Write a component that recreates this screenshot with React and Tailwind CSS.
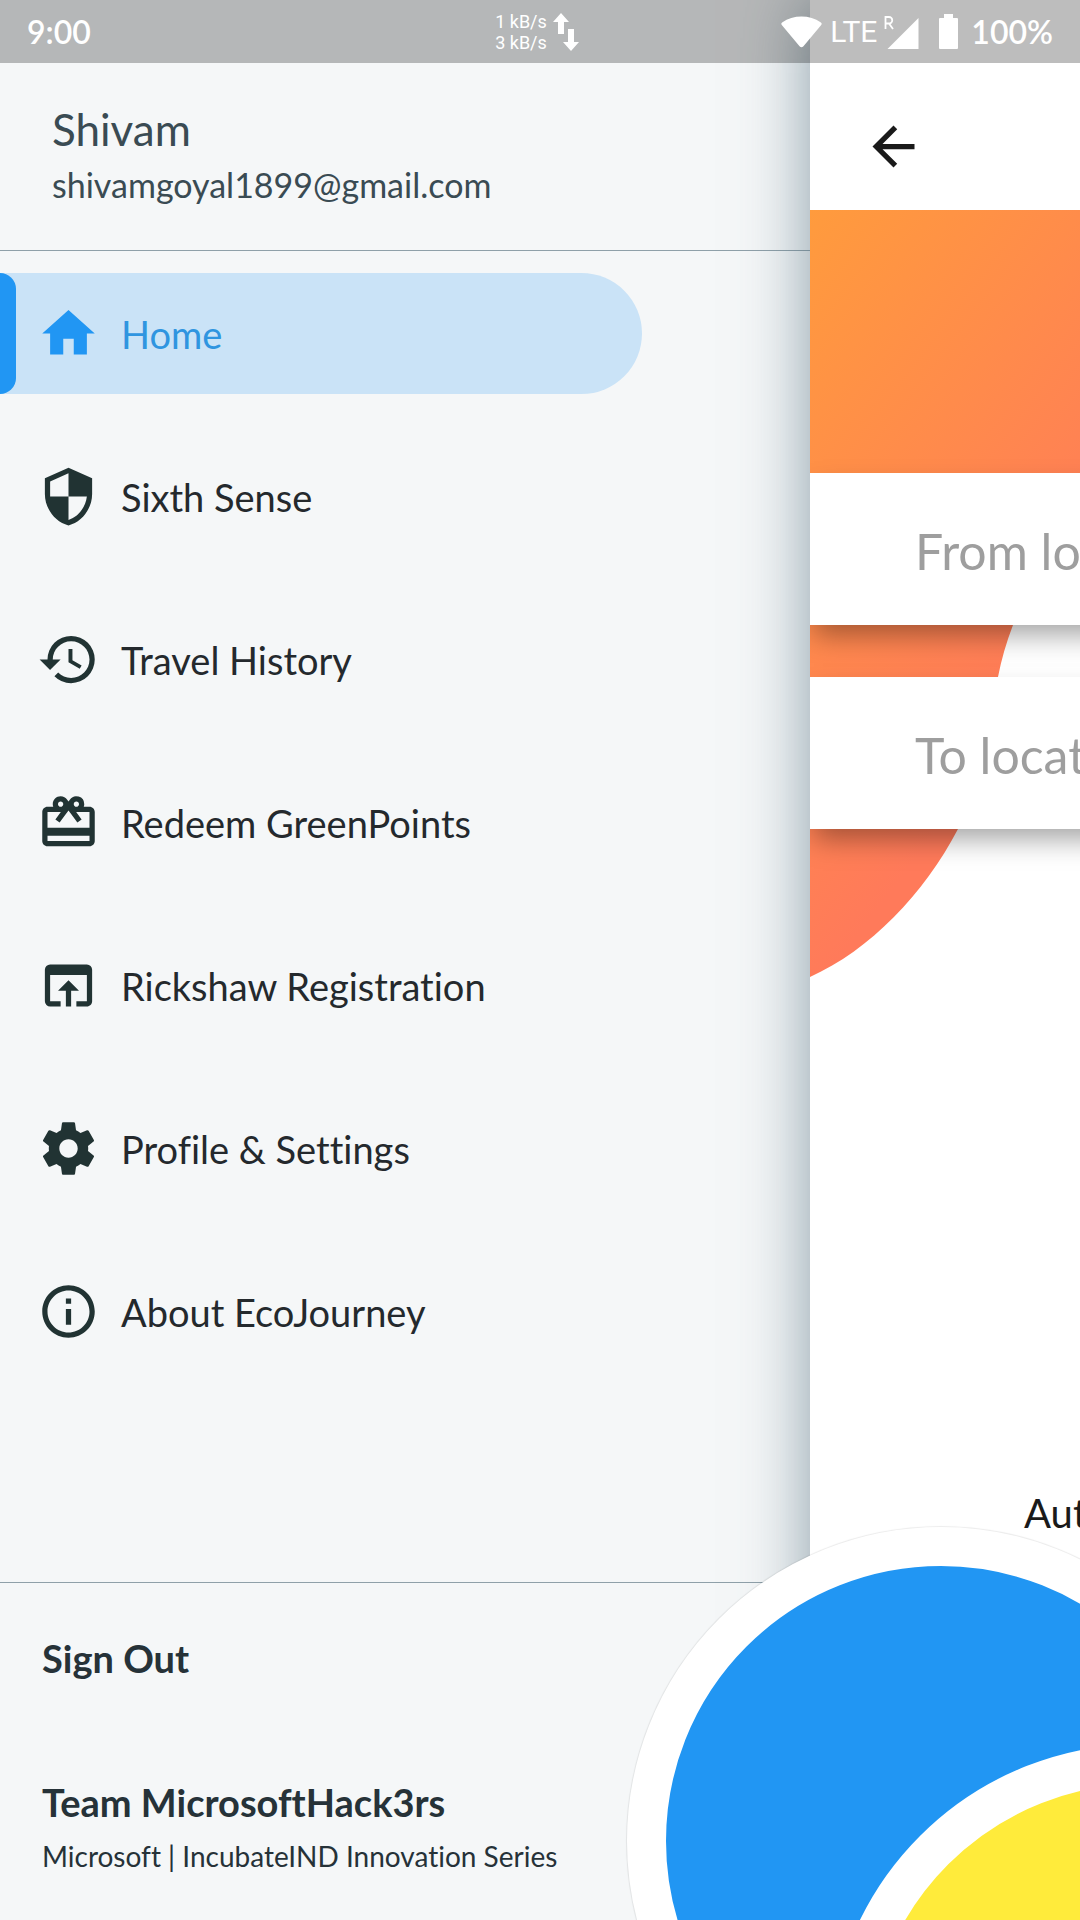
import React from "react";
import {
  MdArrowBack,
  MdHistory,
  MdHome,
  MdInfoOutline,
  MdOpenInBrowser,
  MdRedeem,
  MdSecurity,
} from "react-icons/md";

function GearIcon({ className }) {
  return (
    <svg viewBox="0 0 24 24" fill="currentColor" className={className} aria-hidden="true">
      <path d="M19.43 12.98c.04-.32.07-.64.07-.98s-.03-.66-.07-.98l2.11-1.65c.19-.15.24-.42.12-.64l-2-3.46c-.12-.22-.39-.3-.61-.22l-2.49 1c-.52-.4-1.08-.73-1.69-.98l-.38-2.65A.488.488 0 0 0 14 2h-4c-.25 0-.46.18-.49.42l-.38 2.65c-.61.25-1.17.59-1.69.98l-2.49-1c-.23-.09-.49 0-.61.22l-2 3.46c-.13.22-.07.49.12.64l2.11 1.65c-.04.32-.07.65-.07.98s.03.66.07.98l-2.11 1.65c-.19.15-.24.42-.12.64l2 3.46c.12.22.39.3.61.22l2.49-1c.52.4 1.08.73 1.69.98l.38 2.65c.03.24.24.42.49.42h4c.25 0 .46-.18.49-.42l.38-2.65c.61-.25 1.17-.59 1.69-.98l2.49 1c.23.09.49 0 .61-.22l2-3.46c.12-.22.07-.49-.12-.64l-2.11-1.65zM12 15.5c-1.93 0-3.5-1.57-3.5-3.5s1.57-3.5 3.5-3.5 3.5 1.57 3.5 3.5-1.57 3.5-3.5 3.5z" />
    </svg>
  );
}

const NAV_ITEMS = [
  { label: "Home", icon: MdHome, active: true },
  { label: "Sixth Sense", icon: MdSecurity },
  { label: "Travel History", icon: MdHistory },
  { label: "Redeem GreenPoints", icon: MdRedeem },
  { label: "Rickshaw Registration", icon: MdOpenInBrowser },
  { label: "Profile & Settings", icon: GearIcon },
  { label: "About EcoJourney", icon: MdInfoOutline },
];

function StatusBar() {
  return (
    <div className="absolute inset-x-0 top-0 z-30 flex h-[63px] items-center justify-between bg-black/26 px-[27px] text-white">
      <span className="w-[306px] text-[32px] font-semibold">9:00</span>
      <div className="flex items-center gap-[6px] font-['Roboto',sans-serif] text-[18px] leading-[21px]">
        <div>
          <p>1 kB/s</p>
          <p>3 kB/s</p>
        </div>
        <svg viewBox="0 0 26 38" fill="currentColor" className="h-[38px] w-[26px]" aria-hidden="true">
          <path d="M8 0l8 9h-5v12H5V9H0z" />
          <path d="M18 38l-8-9h5V16h6v13h5z" />
        </svg>
      </div>
      <div className="flex w-[312px] items-center justify-end">
        <svg viewBox="0 0 42 32" fill="currentColor" className="mr-[8px] h-[32px] w-[41px]" aria-hidden="true">
          <path d="M1 9C0 8 0 7 1.500 6C12-2 30-2 40.500 6C42 7 42 8 41 9L23 30.500Q21 32.500 19 30.500z" />
        </svg>
        <span className="font-['Roboto',sans-serif] text-[30px] leading-[38px]">LTE</span>
        <svg viewBox="0 0 36 36" fill="currentColor" className="ml-[6px] h-[36px] w-[36px]" aria-hidden="true">
          <path d="M35.500 4v31H4.500z" />
          <path d="M2.500 15V3h3.500a3.200 3.200 0 0 1 0 6.500H2.500M6 9.500l4 5.500" fill="none" stroke="currentColor" strokeWidth="1.800" />
        </svg>
        <svg viewBox="0 0 19 35" fill="currentColor" className="ml-[20px] h-[35px] w-[19px]" aria-hidden="true">
          <path d="M5 0h9v4h4q1 0 1 1v29q0 1-1 1H1q-1 0-1-1V5q0-1 1-1h4z" />
        </svg>
        <span className="ml-[13px] text-[32px] font-semibold">100%</span>
      </div>
    </div>
  );
}

function NavItem({ label, icon: Icon, active }) {
  return (
    <li>
      <a
        href="#"
        aria-current={active ? "page" : undefined}
        className={
          active
            ? "mr-[168px] flex h-[121px] items-center rounded-r-full bg-[#cae3f7] text-[#2f95e0]"
            : "mr-[168px] flex h-[121px] items-center text-[#24292d]"
        }
      >
        <span
          className={
            active
              ? "h-full w-[16px] shrink-0 rounded-r-[16px] bg-[#2196f3]"
              : "h-full w-[16px] shrink-0"
          }
        />
        <Icon
          className={
            active
              ? "ml-[21px] size-[63px] shrink-0 text-[#2196f3]"
              : "ml-[21px] size-[63px] shrink-0 text-[#213333]"
          }
        />
        <span className="ml-[21px] text-[38px] leading-[48px] whitespace-nowrap">{label}</span>
      </a>
    </li>
  );
}

function Drawer() {
  return (
    <aside className="flex w-3/4 flex-col bg-[#f5f7f8] pt-[63px]">
      <header className="flex h-[188px] flex-col justify-center border-b border-[#8fa0a9] pl-[52px] text-[#3a4b53]">
        <h1 className="text-[44px] leading-[56px]">Shivam</h1>
        <p className="text-[34px] leading-[56px]">shivamgoyal1899@gmail.com</p>
      </header>
      <nav aria-label="Main">
        <ul className="flex flex-col gap-[42px] pt-[22px]">
          {NAV_ITEMS.map((item) => (
            <NavItem key={item.label} {...item} />
          ))}
        </ul>
      </nav>
      <footer className="mt-auto h-[338px] border-t border-[#8fa0a9] pt-[51px] pl-[42px] text-[#263238]">
        <button type="button" className="block text-[38px] leading-[48px] font-bold">
          Sign Out
        </button>
        <p className="mt-[96px] text-[38px] leading-[48px] font-bold">Team MicrosoftHack3rs</p>
        <p className="mt-[10px] text-[28px] leading-[40px]">Microsoft | IncubateIND Innovation Series</p>
      </footer>
    </aside>
  );
}

function LocationField({ id, placeholder }) {
  return (
    <div className="bg-white shadow-[0_14px_26px_-4px_rgba(0,0,0,0.36)]">
      <label htmlFor={id} className="sr-only">
        {placeholder}
      </label>
      <input
        id={id}
        type="text"
        placeholder={placeholder}
        className="block h-[152px] w-full pt-[4px] pl-[105px] text-[50px] outline-none placeholder:text-[#9e9e9e]"
      />
    </div>
  );
}

function Blob() {
  return (
    <svg viewBox="0 0 400 770" className="absolute top-[210px] left-0 h-[770px] w-[400px]" aria-hidden="true">
      <defs>
        <linearGradient id="sunset" gradientUnits="userSpaceOnUse" x1="0" y1="0" x2="380" y2="290">
          <stop offset="0" stopColor="#ff9b3d" />
          <stop offset="1" stopColor="#ff7a5a" />
        </linearGradient>
      </defs>
      <path
        fill="url(#sunset)"
        d="M0 0H400V262C300 290 220 360 203 415Q193 441 188 467C178 520 180 565 148 619C114 684 60 740 0 767z"
      />
    </svg>
  );
}

function RidePage() {
  return (
    <main className="relative z-10 flex w-1/4 flex-col bg-white pt-[63px] shadow-[0_0_64px_rgba(75,105,120,0.64)]">
      <Blob />
      <div className="relative flex h-[147px] items-center pl-[52px]">
        <button type="button" aria-label="Back" className="pt-[20px]">
          <MdArrowBack className="size-[63px] text-[#1a1a1a]" />
        </button>
      </div>
      <div className="relative -mr-[64px] flex flex-col gap-[52px] overflow-x-clip pt-[263px]">
        <LocationField id="from" placeholder="From location" />
        <LocationField id="to" placeholder="To location" />
      </div>
      <p className="relative mt-auto mb-[383px] pl-[214px] text-[40px] leading-[48px] text-[#1a1a1a]">Auto</p>
      <button
        type="button"
        aria-label="Auto ride"
        className="absolute -bottom-[235px] -left-[183px] size-[628px] rounded-full border-[39px] border-white bg-[#2196f3] shadow-[0_0_1px_1px_rgba(0,0,0,0.08)]"
      />
      <button
        type="button"
        aria-label="Shared ride"
        className="absolute -bottom-[452px] left-[18px] size-[628px] rounded-full border-[40px] border-white bg-[#ffeb3b]"
      />
    </main>
  );
}

export default function App() {
  return (
    <div className="relative flex min-h-screen overflow-hidden bg-[#f5f7f8] font-['Lato',sans-serif] [font-variant-ligatures:none]">
      <StatusBar />
      <Drawer />
      <RidePage />
    </div>
  );
}
